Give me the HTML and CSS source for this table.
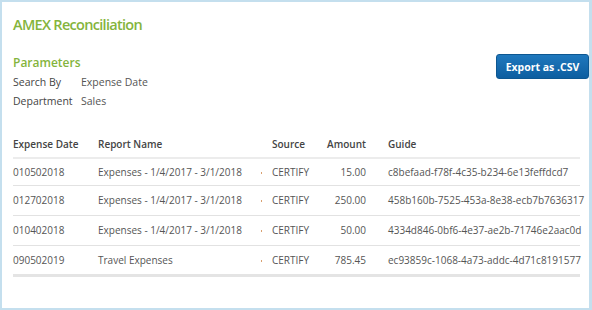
FILE: index.html
```html
<!DOCTYPE html>
<html>
<head>
<meta charset="utf-8">
<link rel="stylesheet" href="styles.css">
</head>
<body>
<div class="frame">
  <h1 class="title">AMEX Reconciliation</h1>
  <div class="params-row">
    <div class="params">
      <h2 class="params-title">Parameters</h2>
      <div class="param"><span class="param-label">Search By</span><span class="param-value">Expense Date</span></div>
      <div class="param"><span class="param-label">Department</span><span class="param-value">Sales</span></div>
    </div>
    <button class="export">Export as .CSV</button>
  </div>
  <table class="grid">
    <colgroup>
      <col class="w-date"><col class="w-name"><col class="w-dot"><col class="w-src"><col class="w-amt"><col class="w-guid">
    </colgroup>
    <thead>
      <tr>
        <th>Expense Date</th>
        <th>Report Name</th>
        <th></th>
        <th>Source</th>
        <th class="num">Amount</th>
        <th class="guid">Guide</th>
      </tr>
    </thead>
    <tbody>
      <tr class="first">
        <td>010502018</td><td>Expenses - 1/4/2017 - 3/1/2018</td><td><span class="dot"></span></td><td>CERTIFY</td><td class="num">15.00</td><td class="guid">c8befaad-f78f-4c35-b234-6e13feffdcd7</td>
      </tr>
      <tr>
        <td>012702018</td><td>Expenses - 1/4/2017 - 3/1/2018</td><td><span class="dot"></span></td><td>CERTIFY</td><td class="num">250.00</td><td class="guid">458b160b-7525-453a-8e38-ecb7b7636317</td>
      </tr>
      <tr>
        <td>010402018</td><td>Expenses - 1/4/2017 - 3/1/2018</td><td><span class="dot"></span></td><td>CERTIFY</td><td class="num">50.00</td><td class="guid">4334d846-0bf6-4e37-ae2b-71746e2aac0d</td>
      </tr>
      <tr>
        <td>090502019</td><td>Travel Expenses</td><td><span class="dot"></span></td><td>CERTIFY</td><td class="num">785.45</td><td class="guid">ec93859c-1068-4a73-addc-4d71c8191577</td>
      </tr>
    </tbody>
  </table>
</div>
</body>
</html>
```

FILE: styles.css
```css
* { box-sizing: border-box; }
html, body { margin: 0; padding: 0; background: #fff; }
body {
  font-family: "Open Sans", "Liberation Sans", sans-serif;
  font-size: 10px;
  color: #555;
}
.frame {
  width: 592px;
  height: 310px;
  border-left: 2px solid #c4dfee;
  border-top: 2px solid #c4dfee;
  border-right: 3px solid #c4dfee;
  border-bottom: 2px solid #c4dfee;
  padding: 11px 8px 0 11px;
  overflow: hidden;
}
.title {
  margin: 0;
  font-size: 14.5px;
  letter-spacing: -0.7px;
  font-weight: 600;
  color: #84b43c;
  line-height: 24px;
}
.params-row {
  display: flex;
  justify-content: space-between;
  align-items: flex-start;
  margin-top: 16px;
}
.params-title {
  margin: 0 0 1px;
  font-size: 12px;
  font-weight: 600;
  color: #84b43c;
  line-height: 19px;
}
.param {
  display: flex;
  line-height: 19px;
  font-size: 10.5px;
  color: #555;
}
.param-label { width: 68px; color: #444; }
.export {
  margin-top: 1px;
  margin-right: -8px;
  width: 93px;
  height: 25px;
  border: 1px solid #0d5791;
  border-radius: 3px;
  background: linear-gradient(#1f78bd, #0d5ea0);
  color: #fff;
  font-family: "Open Sans", "Liberation Sans", sans-serif;
  font-weight: 700;
  font-size: 10.5px;
  padding: 0;
}
.grid {
  margin-top: 19px;
  width: 567px;
  border-collapse: collapse;
  table-layout: fixed;
}
.w-date { width: 85px; }
.w-name { width: 160px; }
.w-dot { width: 14px; }
.w-src { width: 52px; }
.w-amt { width: 42px; }
.w-guid { width: 214px; }
.grid th {
  text-align: left;
  font-weight: 600;
  color: #444;
  height: 28px;
  padding: 0;
  border-bottom: 2px solid #ececec;
  vertical-align: middle;
  white-space: nowrap;
}
.grid td {
  height: 30px;
  padding: 0;
  border-bottom: 1px solid #e2e2e2;
  color: #555;
  white-space: nowrap;
  overflow: visible;
}
.grid tr.first td { height: 27px; }
.grid tbody tr:last-child td { border-bottom: 3px solid #e4e4e4; }
.grid .num { text-align: right; }
.grid .guid { padding-left: 22px; }
.dot {
  display: inline-block;
  width: 1px;
  height: 2px;
  background: #d9a070;
  vertical-align: middle;
  margin-left: 3px;
}
```
